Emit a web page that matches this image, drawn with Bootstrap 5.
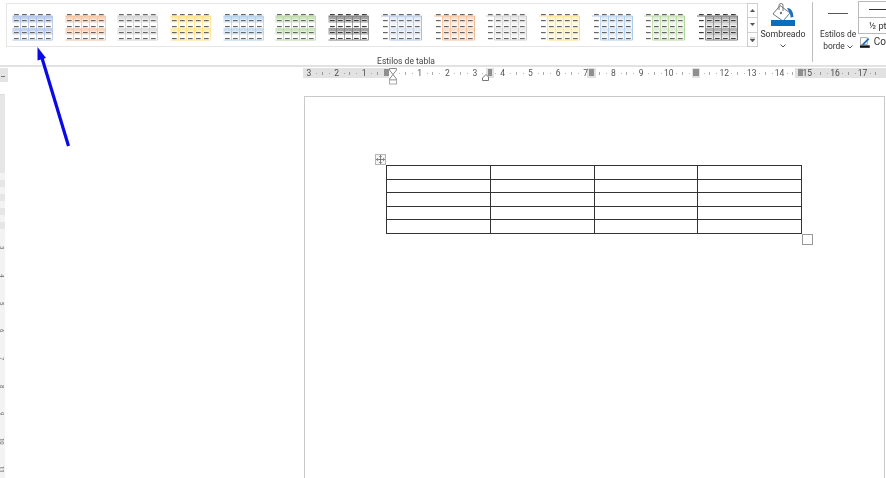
<!DOCTYPE html>
<html lang="es">
<head>
    <meta charset="UTF-8">
    <meta name="viewport" content="width=device-width, initial-scale=1.0">
    <title>Estilos de tabla</title>
    <link href="https://cdn.jsdelivr.net/npm/bootstrap@5.3.0/dist/css/bootstrap.min.css" rel="stylesheet">
    <style>
        html, body { height: 100%; }
        body { width: 886px; height: 478px; overflow: hidden; background: #fff; font-family: Roboto, "Liberation Sans", sans-serif; color: #444; position: relative; }
        .rb-bar { height: 67px; border-bottom: 2px solid #e2e2e2; }
        .rb-main { width: 812px; flex: none; }
        .rb-top { height: 47px; padding: 3px 0 0 6px; }
        .rb-gallery { width: 741px; height: 44px; border: 1px solid #e6e6e6; border-right: 0; padding: 7px 0 0 5px; }
        .rb-thumb { width: 52.7px; flex: none; display: block; }
        .rb-scroll { width: 11px; height: 44px; border: 1px solid #cfcfcf; font-size: 0; }
        .rb-scroll > div { flex: 1; border-bottom: 1px solid #cfcfcf; }
        .rb-scroll > div:last-child { border-bottom: 0; }
        .rb-shade { width: 50px; font-size: 8.8px; line-height: 12px; color: #333; }
        .rb-shade svg { display: block; margin: 0 auto 2px; }
        .rb-label { text-align: center; font-size: 8.5px; line-height: 12px; margin-top: 8px; color: #444; }
        .rb-sep { width: 1px; height: 60px; margin-top: 2px; background: #bdbdbd; flex: none; }
        .rb-border { width: 45px; padding: 13px 0 0 5px; font-size: 8.4px; line-height: 12px; color: #333; flex: none; }
        .rb-line { width: 20px; height: 1px; background: #555; margin: 0 auto 14px; }
        .rb-side { width: 28px; padding-top: 1px; flex: none; font-size: 9.2px; color: #333; }
        .rb-box { height: 17px; border: 1px solid #b9b9b9; border-right: 0; margin-bottom: -1px; line-height: 15px; padding-left: 10px; white-space: nowrap; }
        .rb-box i { display: block; width: 20px; height: 1px; background: #333; margin-top: 7px; }
        .rb-color { padding: 3px 0 0 2px; line-height: 12px; white-space: nowrap; font-size: 10px; }
        .rl-row { height: 14px; margin-top: 1px; }
        .rl-corner { width: 8px; height: 14px; background: #e4e4e4; margin-right: 295px; flex: none; position: relative; }
        .rl-corner::after { content: ""; position: absolute; left: 1px; top: 8px; width: 4px; height: 1px; background: #777; }
        .rl-track { width: 583px; height: 10px; background: #fff; overflow: hidden; position: relative; flex: none; }
        .rl-cells { margin-left: -8px; width: 620px; }
        .rl-cell { width: 27.7px; flex: none; text-align: center; font-size: 8.5px; line-height: 10px; color: #555;
            background-image: linear-gradient(#aaa, #aaa), linear-gradient(#bbb, #bbb), linear-gradient(#bbb, #bbb);
            background-repeat: no-repeat;
            background-size: 1px 3px, 1px 1px, 1px 1px;
            background-position: 100% 4px, 6px 5px, 21px 5px; }
        .rl-gray { position: absolute; top: 0; height: 10px; background: #e2e2e2; mix-blend-mode: multiply; }
        .rl-mark { position: absolute; top: 1px; height: 7px; background: #8f8f8f; }
        .vr-track { position: absolute; left: 0; top: 94px; bottom: 0; width: 5px; background: #f3f3f3; border-top: 1px solid #ddd; overflow: hidden; }
        .vr-head { height: 71px; background: #e6e6e6; }
        .vr-band { height: 7px; background: #e6e6e6; margin-bottom: 7px; }
        .vr-nums { margin-top: -2px; }
        .vr-num { height: 27.7px; width: 5px; writing-mode: vertical-rl; font-size: 6px; line-height: 5px; color: #666; text-align: center; }
        .doc-area { padding: 14px 0 0 304px; }
        .doc-page { height: 400px; border: 1px solid #c9c9c9; border-bottom: 0; margin-right: 1px; padding: 68px 0 0 81px; position: relative; }
        .doc-table { width: 416px; height: 69px; border-collapse: collapse; table-layout: fixed; }
        .doc-table td { border: 1px solid #333; padding: 0; height: 13.6px; }
        .doc-move { position: absolute; left: 70px; top: 57px; width: 11px; height: 11px; border: 1px solid #b5b5b5; background: #f4f4f4; display: flex; }
        .doc-size { position: absolute; left: 497px; top: 137px; width: 11px; height: 11px; border: 1px solid #999; background: #fff; }
        .arrow-over { position: absolute; left: 30px; top: 40px; }
        .ind-over { position: absolute; left: 388px; top: 68px; }
        .tab-over { position: absolute; left: 482px; top: 74px; }
    </style>
</head>
<body>
    <div class="rb-bar d-flex">
        <div class="rb-main">
            <div class="rb-top d-flex">
                <div class="rb-gallery d-flex flex-nowrap" id="gallery"></div>
                <div class="rb-scroll d-flex flex-column">
                    <div class="d-flex align-items-center justify-content-center"><svg width="5" height="3"><path d="M0 3 2.500 0 5 3z" fill="#555"/></svg></div>
                    <div class="d-flex align-items-center justify-content-center"><svg width="5" height="3"><path d="M0 0 2.500 3 5 0z" fill="#555"/></svg></div>
                    <div class="d-flex align-items-center justify-content-center"><svg width="5" height="5"><path d="M0 0H5M0 2 2.500 5 5 2z" fill="#555" stroke="#555" stroke-width=".5"/></svg></div>
                </div>
                <div class="rb-shade text-center">
                    <svg width="26" height="23" viewBox="0 0 26 23">
                        <path d="M10 2.500 20 10 13 18 3 11z" fill="#fff" stroke="#777"/>
                        <path d="M9 7V2.500a2 2 0 0 1 4 0V8" fill="none" stroke="#777"/>
                        <circle cx="11" cy="10" r="1.200" fill="#777"/>
                        <path d="M17 5c4 0 6 3 6.500 9l-3 .5c0-3-.5-5-2-6.500z" fill="#1d6fc2"/>
                        <rect x="1" y="17" width="24" height="6" fill="#0a6ebd"/>
                    </svg>
                    <div>Sombreado</div>
                    <svg class="mt-1" width="6" height="4"><path d="M.5.500 3 3 5.500.5" fill="none" stroke="#555"/></svg>
                </div>
            </div>
            <div class="rb-label">Estilos de tabla</div>
        </div>
        <div class="rb-sep"></div>
        <div class="rb-border text-center">
            <div class="rb-line"></div>
            <div>Estilos de</div>
            <div>borde <svg width="6" height="4" class="align-middle"><path d="M.5.500 3 3 5.500.5" fill="none" stroke="#555"/></svg></div>
        </div>
        <div class="rb-side">
            <div class="rb-box"><i></i></div>
            <div class="rb-box">½ pt</div>
            <div class="rb-color d-flex gap-1">
                <svg width="12" height="13" viewBox="0 0 12 13">
                    <path d="M.5.500H9V9H.500z" fill="#fff" stroke="#999"/>
                    <path d="M3 8 10 1l1.500 1.500-7 7H3z" fill="#1d6fc2"/>
                    <rect y="10" width="12" height="3" fill="#111"/>
                </svg>
                <span>Co</span>
            </div>
        </div>
    </div>

    <div class="rl-row d-flex">
        <div class="rl-corner"></div>
        <div class="rl-track">
            <div class="rl-cells d-flex" id="ruler"></div>
            <div class="rl-gray" style="left:0;width:86px"></div>
            <div class="rl-mark" style="left:81px;width:5px"></div>
            <div class="rl-gray" style="left:183px;width:8px"></div>
            <div class="rl-mark" style="left:185px;width:4px"></div>
            <div class="rl-gray" style="left:284px;width:9px"></div>
            <div class="rl-mark" style="left:286px;width:5px"></div>
            <div class="rl-gray" style="left:389px;width:8px"></div>
            <div class="rl-mark" style="left:390px;width:6px"></div>
            <div class="rl-gray" style="left:492px;width:91px"></div>
            <div class="rl-mark" style="left:495px;width:5px"></div>
        </div>
    </div>

    <div class="doc-area">
        <div class="doc-page">
            <div class="doc-move align-items-center justify-content-center">
                <svg width="9" height="9" viewBox="0 0 9 9"><path d="M4.500 .5V8.500M.5 4.500H8.500" stroke="#555" stroke-width=".7"/><path d="M3.200 1.800 4.500 .5 5.800 1.800M3.200 7.200 4.500 8.500 5.800 7.200M1.800 3.200 .5 4.500 1.800 5.800M7.200 3.200 8.500 4.500 7.200 5.800" fill="none" stroke="#555" stroke-width=".7"/></svg>
            </div>
            <table class="doc-table">
                <tbody>
                    <tr><td></td><td></td><td></td><td></td></tr>
                    <tr><td></td><td></td><td></td><td></td></tr>
                    <tr><td></td><td></td><td></td><td></td></tr>
                    <tr><td></td><td></td><td></td><td></td></tr>
                    <tr><td></td><td></td><td></td><td></td></tr>
                </tbody>
            </table>
            <div class="doc-size"></div>
        </div>
    </div>

    <div class="vr-track" id="vruler"></div>

    <!-- indent markers and arrow sit over the ruler and ribbon -->
    <svg class="ind-over" width="10" height="18" viewBox="0 0 10 18">
        <path d="M1.500.500H8.500V2L5 6.500 1.500 2zM5 6.500 8.500 11V12H1.500V11z" fill="#fff" stroke="#888"/>
        <rect x="1.500" y="12" width="7" height="4" fill="#fff" stroke="#aaa"/>
    </svg>
    <svg class="tab-over" width="8" height="7" viewBox="0 0 8 7">
        <path d="M.5 6.500V4L4 .5 6.500 3V6.500z" fill="#fff" stroke="#777"/>
    </svg>
    <svg class="arrow-over" width="50" height="112" viewBox="0 0 50 112">
        <path d="M38.500 106 12 18" stroke="#0a0ae6" stroke-width="3.200" fill="none"/>
        <path d="M7.500 7 16 18 7.500 20.500z" fill="#0a0ae6"/>
    </svg>

    <script>
        // colours of the 14 table style previews: [band, line, dash]
        const styles = [
            ['#c3d2ee', '#a9c0e6', '#666'], ['#fbd3b8', '#f6bb93', '#666'], ['#e0e0e0', '#cfcfcf', '#666'],
            ['#ffecac', '#ffdf7c', '#666'], ['#c9def2', '#aacbe9', '#666'], ['#cfe5c0', '#b3d69b', '#666'],
            ['#a3a3a3', '#777', '#3c3c3c'],
            ['#e2eaf7', '#a9c0e6', '#666'], ['#fcdfcb', '#f6bb93', '#666'], ['#ebebeb', '#cfcfcf', '#666'],
            ['#fff3c8', '#ffdf7c', '#666'], ['#deebf7', '#aacbe9', '#666'], ['#e2efd8', '#b3d69b', '#666'],
            ['#b5b5b5', '#777', '#3c3c3c']
        ];

        function thumb(s, i) {
            const [band, line, dash] = s;
            const side = i >= 7;
            const left = side ? 8.5 : 0.5;
            const right = 40.5;
            const ys = [3, 9, 15, 21, 27];
            let out = '';
            if (side) {
                out += `<rect x="${left}" y="5" width="${right - left}" height="24" fill="${band}" opacity=".45"/>`;
            }
            [5, 17].forEach(y => {
                out += `<rect x="${left}" y="${y}" width="${right - left}" height="6.500" fill="${band}"/>`;
            });
            for (let c = 0; c < (side ? 5 : 6); c++) {
                const x = side ? 8.5 + c * 8 : 0.5 + c * 8;
                if (c > 0 || side) out += `<rect x="${x - 0.5}" y="5" width="1" height="24" fill="${line}" opacity=".7"/>`;
            }
            out += `<rect x="${side ? 0 : left}" y="4.500" width="${right - (side ? 0 : left)}" height="1" fill="${line}"/>`;
            out += `<rect x="${left}" y="28.500" width="${right - left}" height="1" fill="${line}"/>`;
            if (side) out += `<rect x="40" y="5" width="1" height="24" fill="${line}"/>`;
            ys.forEach(y => {
                for (let c = 0; c < 5; c++) {
                    const x = 2 + c * 8;
                    if (y > 3) out += `<rect x="${x - 0.5}" y="${y - 1}" width="6" height="3" fill="#fff" opacity=".55"/>`;
                    out += `<rect x="${x}" y="${y}" width="4.700" height="1.200" fill="${dash}"/>`;
                }
            });
            return `<svg class="rb-thumb" height="30" viewBox="0 0 52.700 30" preserveAspectRatio="xMinYMin">${out}</svg>`;
        }
        document.getElementById('gallery').innerHTML = styles.map(thumb).join('');

        // horizontal ruler, one cell per centimetre from -3 to 17
        let cells = '';
        for (let n = -3; n <= 17; n++) {
            const hidden = n === 0 || n === 11;
            cells += `<div class="rl-cell">${hidden ? '' : Math.abs(n)}</div>`;
        }
        document.getElementById('ruler').innerHTML = cells;

        // vertical ruler: margin head, table row bands, then numbers
        let vr = '<div class="vr-head"></div>';
        for (let r = 0; r < 5; r++) vr += '<div class="vr-band"></div>';
        vr += '<div class="vr-nums">';
        for (let n = 3; n <= 11; n++) vr += `<div class="vr-num">${n}</div>`;
        vr += '</div>';
        document.getElementById('vruler').innerHTML = vr;
    </script>
    <script src="https://cdn.jsdelivr.net/npm/bootstrap@5.3.0/dist/js/bootstrap.bundle.min.js"></script>
</body>
</html>
